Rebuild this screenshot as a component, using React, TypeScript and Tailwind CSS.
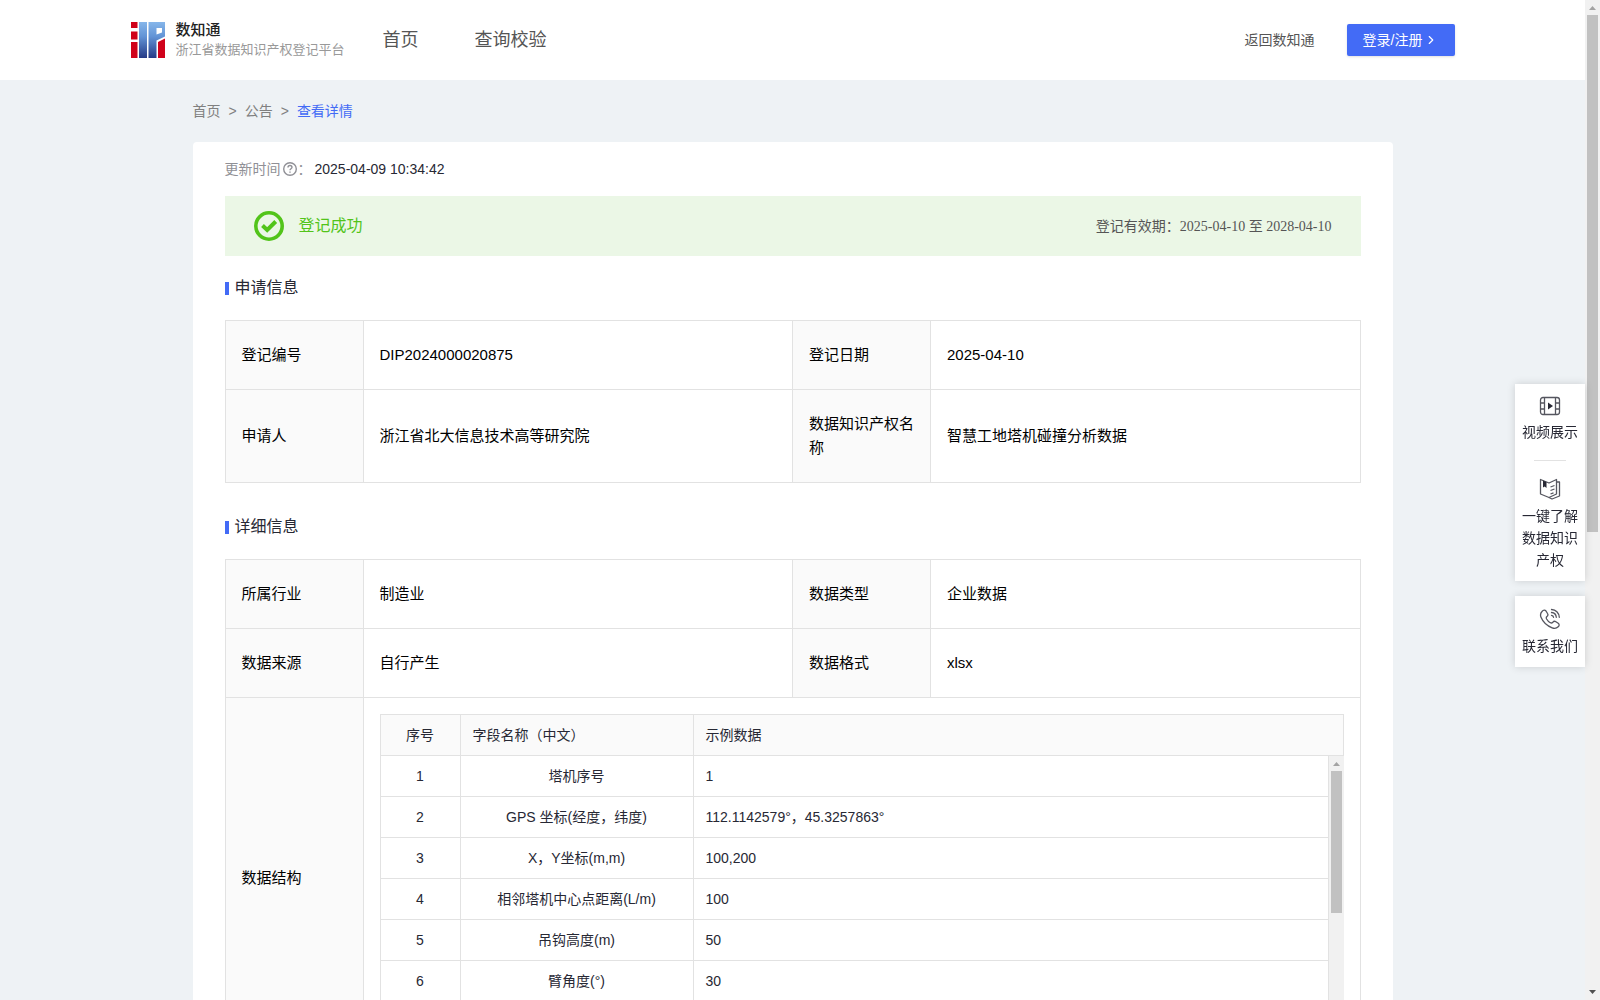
import type { ReactNode } from 'react';
import { ChevronRight } from 'lucide-react';

type Pair = { label: string; value: string };

const applyRows: Pair[][] = [
  [
    { label: '登记编号', value: 'DIP2024000020875' },
    { label: '登记日期', value: '2025-04-10' },
  ],
  [
    { label: '申请人', value: '浙江省北大信息技术高等研究院' },
    { label: '数据知识产权名称', value: '智慧工地塔机碰撞分析数据' },
  ],
];

const detailRows: Pair[][] = [
  [
    { label: '所属行业', value: '制造业' },
    { label: '数据类型', value: '企业数据' },
  ],
  [
    { label: '数据来源', value: '自行产生' },
    { label: '数据格式', value: 'xlsx' },
  ],
];

const fields = [
  { name: '塔机序号', sample: '1' },
  { name: 'GPS 坐标(经度，纬度)', sample: '112.1142579°，45.3257863°' },
  { name: 'X，Y坐标(m,m)', sample: '100,200' },
  { name: '相邻塔机中心点距离(L/m)', sample: '100' },
  { name: '吊钩高度(m)', sample: '50' },
  { name: '臂角度(°)', sample: '30' },
];

function Logo() {
  return (
    <svg width="34" height="36" viewBox="0 0 34 36" aria-hidden="true">
      <defs>
        <linearGradient id="logoBlue" gradientUnits="userSpaceOnUse" x1="0" y1="0" x2="0" y2="36">
          <stop offset="0" stopColor="#86b6ea" />
          <stop offset="0.4" stopColor="#6394d6" />
          <stop offset="1" stopColor="#253a86" />
        </linearGradient>
      </defs>
      <path d="M0 0h6.500v6H0zM0 9.500h6.500v8H0zM0 20h6.500v16H0z" fill="#d0021b" />
      <path d="M8 0h8v36H8z" fill="url(#logoBlue)" />
      <path d="M17.500 0H34v14.500l-8.500 4V36h-8zM25.500 6v6.500l5.500-2V6z" fill="url(#logoBlue)" fillRule="evenodd" />
      <path d="M34 16.500V36h-7V20z" fill="#d0021b" />
    </svg>
  );
}

function SectionTitle({ children }: { children: ReactNode }) {
  return (
    <h2 className="flex h-6 items-center gap-[6px] text-[16px] text-[#272834]">
      <span className="mt-px h-[13px] w-1 bg-[#436bf6]" />
      {children}
    </h2>
  );
}

function Columns() {
  return (
    <colgroup>
      <col className="w-[138px]" />
      <col />
      <col className="w-[138px]" />
      <col />
    </colgroup>
  );
}

function PairRow({ pairs }: { pairs: Pair[] }) {
  return (
    <tr>
      {pairs.map(({ label, value }) => [
        <th
          key={label}
          scope="row"
          className="border border-[#e2e2e2] bg-[#fafafa] px-4 py-[22px] text-left font-normal"
        >
          {label}
        </th>,
        <td key={value} className="border border-[#e2e2e2] px-4 py-[22px]">
          {value}
        </td>,
      ])}
    </tr>
  );
}

function FieldColumns() {
  return (
    <colgroup>
      <col className="w-20" />
      <col className="w-[233px]" />
      <col />
    </colgroup>
  );
}

function FieldTable() {
  return (
    <div className="text-[14px] leading-[22px] text-[#272834]">
      <table className="w-full table-fixed border-collapse">
        <FieldColumns />
        <thead>
          <tr className="h-[41px] bg-[#fafafa]">
            <th className="border border-[#e2e2e2] font-normal">序号</th>
            <th className="border border-[#e2e2e2] px-3 text-left font-normal">字段名称（中文）</th>
            <th className="border border-[#e2e2e2] px-3 text-left font-normal">示例数据</th>
          </tr>
        </thead>
      </table>
      <div className="flex h-[286px]">
        <div className="flex-1 overflow-hidden">
          <table className="w-full table-fixed border-collapse">
            <FieldColumns />
            <tbody>
              {fields.map((field, i) => (
                <tr key={field.name} className="h-[41px] first:h-10">
                  <td className="border border-t-0 border-[#e2e2e2] text-center">{i + 1}</td>
                  <td className="border border-t-0 border-[#e2e2e2] px-3 text-center">{field.name}</td>
                  <td className="border border-t-0 border-[#e2e2e2] px-3">{field.sample}</td>
                </tr>
              ))}
            </tbody>
          </table>
        </div>
        <ScrollTrack thumb="h-[142px]" />
      </div>
    </div>
  );
}

function ScrollTrack({ thumb }: { thumb: string }) {
  return (
    <div className="flex w-[15px] shrink-0 flex-col items-center bg-[#f1f1f1]" aria-hidden="true">
      <svg width="15" height="15" viewBox="0 0 15 15" className="shrink-0">
        <path d="M4 10l3.5-4 3.5 4z" fill="#a3a3a3" />
      </svg>
      <div className={`w-[11px] bg-[#c1c1c1] ${thumb}`} />
      <svg width="15" height="15" viewBox="0 0 15 15" className="mt-auto shrink-0">
        <path d="M4 5l3.5 4L11 5z" fill="#505050" />
      </svg>
    </div>
  );
}

function VideoIcon() {
  return (
    <svg width="22" height="20" viewBox="0 0 22 20" fill="none" stroke="#55565f" strokeWidth="1.3">
      <rect x="1.5" y="1.5" width="19" height="17" rx="2.500" />
      <path d="M5.5 1.5v17M16.5 1.5v17M1.5 7h4M1.5 13h4M16.5 7h4M16.5 13h4" />
      <path d="M9 6.5l5 3.5-5 3.5z" fill="#272834" stroke="none" />
    </svg>
  );
}

function BookIcon() {
  return (
    <svg width="22" height="22" viewBox="0 0 22 22" fill="none" stroke="#55565f" strokeWidth="1.3" strokeLinejoin="round">
      <path d="M1.500 1.500L10 5l7.500-3.500v14.500L10 19.500l-8.500-3.500z" />
      <path d="M18 4h2.500v14L13 21l-3-1.500" />
      <path d="M11.500 9l4-1.500M11.500 12.500l4-1.500M11.500 16l3-1.200" />
      <path d="M4 2.500l3.500 1.500v6L5.700 8.500 4 9.500z" fill="#272834" stroke="none" />
    </svg>
  );
}

function PhoneIcon() {
  return (
    <svg width="22" height="22" viewBox="0 0 22 22" fill="none" stroke="#55565f" strokeWidth="1.3" strokeLinecap="round" strokeLinejoin="round">
      <path d="M3 3.500C4.500 1.800 6 1.800 7 3l1.500 2.500c.8 1.200.4 2.200-.6 3-.8.700-.8 1.500-.3 2.500 1 1.800 2 2.800 3.700 3.700 1 .5 1.800.4 2.400-.4.900-1.100 2-1.400 3.200-.600l2.300 1.600c1.300 1 1.200 2.300 0 3.400-1.700 1.700-3.700 2-6 1.100C7.500 17.600 4 14 2 9.200c-.9-2.200-.6-4 1-5.700z" />
      <path d="M12.500 1.500c4.300.2 7.500 3.400 7.800 7.800M12.500 4.500c2.700.2 4.600 2.100 4.800 4.800M12.500 7.300c1.200.1 1.900.8 2 2" />
    </svg>
  );
}

function SideLink({ icon, children }: { icon: ReactNode; children: ReactNode }) {
  return (
    <a href="#" className="flex flex-col items-center gap-[5px] text-center">
      {icon}
      <span className="w-14">{children}</span>
    </a>
  );
}

function Header() {
  return (
    <header className="bg-white">
      <div className="mx-auto flex h-20 max-w-[1324px] items-center">
        <a href="#" className="flex items-center gap-[11px]">
          <Logo />
          <span className="flex flex-col">
            <span className="text-[15px] leading-5 font-medium text-[#222222]">数知通</span>
            <span className="text-[13px] leading-5 text-[#999999]">浙江省数据知识产权登记平台</span>
          </span>
        </a>
        <nav className="ml-[38px] flex gap-14 text-[18px] text-[#555555]">
          <a href="#">首页</a>
          <a href="#">查询校验</a>
        </nav>
        <a href="#" className="ml-auto text-[14px] text-[#555555]">
          返回数知通
        </a>
        <button
          type="button"
          className="ml-8 flex h-8 w-[108px] items-center rounded-[2px] bg-[#436bf6] pl-4 text-[14px] text-white shadow-sm"
        >
          登录/注册
          <ChevronRight size={14} className="ml-[2px]" />
        </button>
      </div>
    </header>
  );
}

export default function App() {
  return (
    <div className="flex h-screen overflow-hidden bg-[#eef2f5] font-['Liberation_Sans','Noto_Sans_CJK_SC',sans-serif]">
      <div className="min-w-0 flex-1 overflow-hidden">
        <Header />

        <main className="mx-auto max-w-[1200px]">
          {/* Breadcrumb */}
          <nav className="flex h-[62px] items-center gap-2 text-[14px] text-[#808080]">
            <a href="#">首页</a>
            <span>&gt;</span>
            <a href="#">公告</a>
            <span>&gt;</span>
            <span className="text-[#436bf6]">查看详情</span>
          </nav>

          <div className="rounded bg-white px-8 pt-4 pb-8">
            <p className="flex h-[22px] items-center text-[14px] text-[#909096]">
              更新时间
              <svg width="16" height="16" viewBox="0 0 16 16" fill="none" stroke="#909096" strokeWidth="1.4" className="ml-[1px]">
                <circle cx="8" cy="8" r="6.300" />
                <path d="M6 6.500c0-1.200.9-2 2-2s2 .8 2 1.800c0 1.400-2 1.500-2 2.900M8 10.500v1.300" />
              </svg>
              ：<span className="ml-[3px] text-[#272834]">2025-04-09 10:34:42</span>
            </p>

            {/* Registration status */}
            <div className="mt-4 flex h-[60px] items-center bg-[#ebf7e6] px-[29px]">
              <svg width="30" height="30" viewBox="0 0 30 30" fill="none" stroke="#52c41a">
                <circle cx="15" cy="15" r="13.200" strokeWidth="3.600" />
                <path d="M8.500 14.500l4.700 4.500 8.500-8.500" strokeWidth="4" />
              </svg>
              <span className="ml-[15px] text-[16px] text-[#52c41a]">登记成功</span>
              <span className="ml-auto font-['Liberation_Serif','Noto_Sans_CJK_SC',serif] text-[14px] text-[#555555]">
                登记有效期：2025-04-10 至 2028-04-10
              </span>
            </div>

            <div className="mt-5">
              <SectionTitle>申请信息</SectionTitle>
              <table className="mt-5 w-full table-fixed border-collapse text-[15px] leading-6 text-black">
                <Columns />
                <tbody>
                  {applyRows.map((pairs) => (
                    <PairRow key={pairs[0].label} pairs={pairs} />
                  ))}
                </tbody>
              </table>
            </div>

            <div className="mt-8">
              <SectionTitle>详细信息</SectionTitle>
              <table className="mt-5 w-full table-fixed border-collapse text-[15px] leading-6 text-black">
                <Columns />
                <tbody>
                  {detailRows.map((pairs) => (
                    <PairRow key={pairs[0].label} pairs={pairs} />
                  ))}
                  <tr>
                    <th
                      scope="row"
                      className="border border-[#e2e2e2] bg-[#fafafa] px-4 text-left font-normal"
                    >
                      数据结构
                    </th>
                    <td colSpan={3} className="border border-[#e2e2e2] p-4">
                      <FieldTable />
                    </td>
                  </tr>
                </tbody>
              </table>
            </div>
          </div>
        </main>
      </div>

      {/* Floating help links */}
      <aside className="fixed top-[384px] right-[15px] flex w-[70px] flex-col gap-[15px] text-[14px] leading-[22px] text-[#272834]">
        <div className="flex flex-col items-center bg-white pt-3 pb-[10px] shadow-[0_0_8px_rgba(0,0,0,0.15)]">
          <SideLink icon={<VideoIcon />}>视频展示</SideLink>
          <hr className="my-[17px] w-8 border-[#e2e2e2]" />
          <SideLink icon={<BookIcon />}>一键了解数据知识产权</SideLink>
        </div>
        <div className="flex flex-col items-center bg-white pt-3 pb-[10px] shadow-[0_0_8px_rgba(0,0,0,0.15)]">
          <SideLink icon={<PhoneIcon />}>联系我们</SideLink>
        </div>
      </aside>

      <ScrollTrack thumb="h-[517px]" />
    </div>
  );
}
